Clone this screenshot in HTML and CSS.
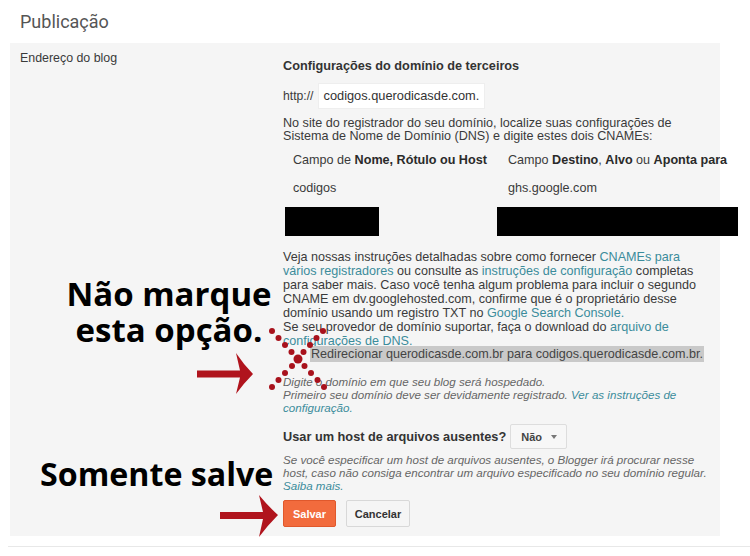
FILE: index.html
```html
<!DOCTYPE html>
<html lang="pt-BR">
<head>
<meta charset="utf-8">
<title>Publicação</title>
<link rel="stylesheet" href="styles.css">
</head>
<body>
<div class="page">
  <h1 class="title">Publicação</h1>
  <section class="panel">
    <div class="label">Endereço do blog</div>
    <div class="content">
      <h2 class="heading">Configurações do domínio de terceiros</h2>
      <div class="url-row">
        <span class="prefix">http://</span>
        <span class="url-input">codigos.querodicasde.com.</span>
      </div>
      <p class="text dns">No site do registrador do seu domínio, localize suas configurações de<br>Sistema de Nome de Domínio (DNS) e digite estes dois CNAMEs:</p>
      <div class="cname">
        <div class="cell">Campo de <b>Nome, Rótulo ou Host</b></div>
        <div class="cell">Campo <b>Destino</b>, <b>Alvo</b> ou <b>Aponta para</b></div>
        <div class="cell">codigos</div>
        <div class="cell">ghs.google.com</div>
      </div>
      <div class="redacted">
        <div class="black b1"></div>
        <div class="black b2"></div>
      </div>
      <p class="text help">Veja nossas instruções detalhadas sobre como fornecer <a href="#">CNAMEs para<br>vários registradores</a> ou consulte as <a href="#">instruções de configuração</a> completas<br>para saber mais. Caso você tenha algum problema para incluir o segundo<br>CNAME em dv.googlehosted.com, confirme que é o proprietário desse<br>domínio usando um registro TXT no <a href="#">Google Search Console.</a><br>Se seu provedor de domínio suportar, faça o download do <a href="#">arquivo de<br>configurações de DNS.</a></p>
      <div class="redirect"><span class="redirect-label">Redirecionar querodicasde.com.br para codigos.querodicasde.com.br.</span></div>
      <p class="note">Digite o domínio em que seu blog será hospedado.<br>Primeiro seu domínio deve ser devidamente registrado. <a href="#">Ver as instruções de<br>configuração.</a></p>
      <div class="missing-row">
        <span class="missing-label">Usar um host de arquivos ausentes?</span>
        <span class="select">Não <span class="caret"></span></span>
      </div>
      <p class="note missing-note">Se você especificar um host de arquivos ausentes, o Blogger irá procurar nesse<br>host, caso não consiga encontrar um arquivo especificado no seu domínio regular.<br><a href="#">Saiba mais.</a></p>
      <div class="actions">
        <button class="btn btn-save">Salvar</button>
        <button class="btn btn-cancel">Cancelar</button>
      </div>
    </div>
  </section>
  <div class="rule"></div>

  <div class="callout callout-top">
    <div class="callout-line">Não marque</div>
    <div class="callout-line">esta opção.</div>
  </div>
  <div class="callout callout-bottom">Somente salve</div>
  <svg class="marks" width="750" height="556" viewBox="0 0 750 556" xmlns="http://www.w3.org/2000/svg">
    <g fill="#b0141d">
      <path d="M197 370.5 L240 370.5 L236 353 Q244 365 253 374 Q244 383 236 394 L240 377.5 L197 377.5 Z"/>
      <path d="M220 512 L263 512 L259 495 Q268 506 278 515 Q268 525 259 537 L263 519 L220 519 Z"/>
    </g>
    <g fill="#a8121c">
      <circle cx="272" cy="331" r="3"/>
      <circle cx="278.5" cy="338" r="3"/>
      <circle cx="285" cy="345" r="3"/>
      <circle cx="291.5" cy="352" r="3"/>
      <circle cx="298" cy="359" r="4.5"/>
      <circle cx="304.5" cy="366" r="3"/>
      <circle cx="311" cy="373" r="3"/>
      <circle cx="317.5" cy="380" r="3"/>
      <circle cx="324" cy="387" r="3"/>
      <circle cx="323" cy="331" r="3"/>
      <circle cx="316.5" cy="338" r="3"/>
      <circle cx="310" cy="345" r="3"/>
      <circle cx="303.5" cy="352" r="3"/>
      <circle cx="292" cy="366" r="3"/>
      <circle cx="285" cy="373" r="3"/>
      <circle cx="278.5" cy="380" r="3"/>
      <circle cx="272" cy="387" r="3"/>
    </g>
  </svg>
</div>
</body>
</html>
```

FILE: styles.css
```css
* { box-sizing: border-box; }

html, body {
  margin: 0;
  padding: 0;
  background: #ffffff;
}

.page {
  position: relative;
  width: 750px;
  height: 556px;
  overflow: hidden;
  font-family: "Liberation Sans", Arial, sans-serif;
  font-size: 12.6px;
  line-height: 14px;
  color: #3a3a3a;
}

.title {
  margin: 0 0 11px 0;
  padding: 12px 20px 0;
  height: 32px;
  font-family: Roboto, "Noto Sans", sans-serif;
  font-weight: 400;
  font-size: 18px;
  line-height: 20px;
  color: #555555;
}

.panel {
  margin-left: 10px;
  width: 710px;
  height: 493px;
  background: #f5f5f5;
  display: grid;
  grid-template-columns: 263px 1fr;
  padding: 8px 0 0 10px;
}

.label {
  font-size: 12.4px;
  color: #3a3a3a;
}

.content {
  min-width: 0;
  white-space: nowrap;
}

.heading {
  margin: 8px 0 0;
  font-size: 12.7px;
  line-height: 14px;
  font-weight: bold;
  color: #333333;
}

.url-row {
  margin-top: 10px;
  display: flex;
  align-items: center;
  height: 26px;
}

.prefix {
  margin-right: 4px;
  font-size: 12.2px;
}

.url-input {
  width: 167px;
  height: 26px;
  background: #ffffff;
  border: 1px solid #eeeeee;
  padding: 0 5px;
  font-size: 12.8px;
  line-height: 24px;
  color: #333333;
  overflow: hidden;
}

.text {
  margin: 0;
}

.dns {
  margin-top: 8px;
  line-height: 13px;
}

.cname {
  margin-top: 3px;
  display: grid;
  grid-template-columns: 215px auto;
}

.cell {
  padding: 7px 0 7px 10px;
}

.cell b {
  color: #2a2a2a;
}

.redacted {
  display: flex;
  gap: 118px;
  margin: 5px 0 0 2px;
}

.black {
  flex-shrink: 0;
  height: 29px;
  background: #000000;
}

.b1 { width: 94px; }
.b2 { width: 241px; }

.help {
  margin-top: 14px;
}

a {
  color: #3b8c9b;
  text-decoration: none;
}

.redirect {
  margin-top: -2px;
  padding-left: 27px;
  height: 16px;
}

.redirect-label {
  display: inline-block;
  background: #c9c9c9;
  padding: 0 1px;
  line-height: 16px;
  color: #444444;
}

.note {
  margin: 13px 0 0;
  font-style: italic;
  font-size: 11.6px;
  line-height: 13px;
  color: #666666;
}

.missing-row {
  margin-top: 10px;
  display: flex;
  align-items: center;
  height: 25px;
}

.missing-label {
  font-weight: bold;
  font-size: 12.75px;
  color: #333333;
}

.select {
  margin-left: 4px;
  width: 57px;
  height: 25px;
  display: inline-flex;
  align-items: center;
  padding-left: 10px;
  gap: 9px;
  background: #f7f7f7;
  border: 1px solid #dddddd;
  border-radius: 2px;
  font-size: 11px;
  font-weight: bold;
  color: #444444;
}

.caret {
  width: 0;
  height: 0;
  border-left: 3.5px solid transparent;
  border-right: 3.5px solid transparent;
  border-top: 4px solid #777777;
}

.missing-note {
  margin-top: 4px;
}

.actions {
  margin-top: 8px;
  display: flex;
  gap: 10px;
}

.btn {
  height: 27px;
  font-family: "Liberation Sans", Arial, sans-serif;
  font-size: 11px;
  font-weight: bold;
  border-radius: 2px;
  padding: 0;
}

.btn-save {
  width: 53px;
  background: #f26b3d;
  border: 1px solid #e0582c;
  color: #ffffff;
}

.btn-cancel {
  width: 64px;
  background: #f5f5f5;
  border: 1px solid #d8d8d8;
  color: #333333;
}

.rule {
  margin: 10px 0 0 8px;
  height: 1px;
  background: #e8e8e8;
}

.callout {
  position: absolute;
  font-family: "Open Sans", "Noto Sans", sans-serif;
  font-weight: 700;
  font-size: 33px;
  line-height: 36px;
  color: #000000;
  white-space: nowrap;
}

.callout-line {
  height: 36px;
}

.callout-top {
  left: 19px;
  top: 276px;
  width: 300px;
  text-align: center;
}

.callout-bottom {
  left: 40px;
  top: 456px;
  font-size: 32.2px;
}

.marks {
  position: absolute;
  left: 0;
  top: 0;
  pointer-events: none;
}
```
